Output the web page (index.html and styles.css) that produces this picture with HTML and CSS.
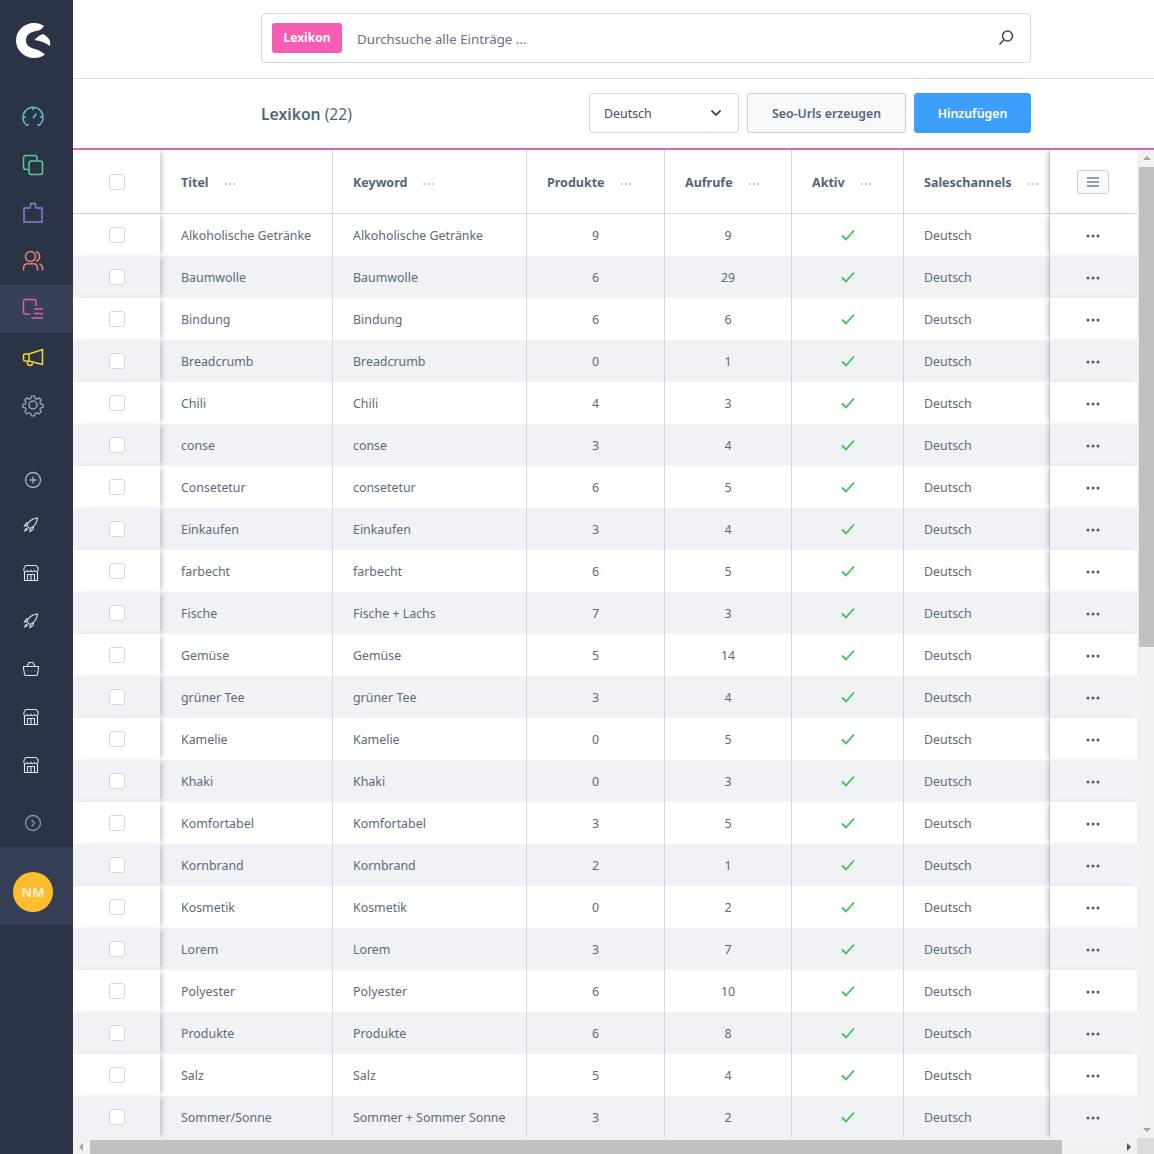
FILE: index.html
```html
<!DOCTYPE html>
<html lang="de">
<head>
    <meta charset="UTF-8">
    <title>Lexikon</title>
    <link rel="stylesheet" href="styles.css">
</head>
<body>
<svg class="defs" width="0" height="0">
    <symbol id="i-rocket" viewBox="0 0 18 18">
        <path d="M6.500 11.500 5 9.500c1.500-4 5-7 10.500-7.500C15.200 7 12 10.500 8.500 12.500z M5.500 9.500 2.500 10l2-3 2.500-.5 M8.500 12.500 8 15.500l3-2 .5-3 M5 12c-1.200.5-2 1.500-2.300 3 1.500-.3 2.500-1 3.200-2.200"/>
    </symbol>
    <symbol id="i-store" viewBox="0 0 18 18">
        <path d="M2.500 8v8.500h13V8 M1.800 6.500C1.800 3 3 1.500 5 1.500h8c2 0 3.200 1.500 3.200 5-1 1.500-2.700 1.500-3.600 0-.9 1.500-2.800 1.500-3.600 0-.8 1.500-2.700 1.500-3.600 0-.9 1.500-2.600 1.500-3.600 0z M5.500 16.500v-6h7v6 M9 10.500v6"/>
    </symbol>
    <symbol id="i-dots" viewBox="0 0 14 4">
        <circle cx="2" cy="2" r="1.500"/><circle cx="7" cy="2" r="1.500"/><circle cx="12" cy="2" r="1.500"/>
    </symbol>
    <symbol id="i-check" viewBox="0 0 14 12">
        <path d="M1 6.500 5 10.500 13 1.500"/>
    </symbol>
</svg>

<div class="app">
    <nav class="sidebar">
        <div class="logo">
            <svg width="36" height="36" viewBox="0 0 36 36"><path class="logo-mark" d="M29 4C26 2 23 1 19 1 9 1 1 9 1 18.500S9 36 19 36c4 0 8-1 11-3.500C26 29 22 27.500 18 26.500 13 25 11 22 11 18.500 11 13 15 10 21 9 25 8.500 27 7 29 4z M19.500 18c2.500-3 5.500-5 8.500-6 3 1.500 5.500 4 7 7 .2 2 .2 3 0 5-4.500-3.500-10-5-15.500-6z"/></svg>
        </div>
        <ul class="nav-main">
            <li class="nav-item nav-cyan">
                <svg width="24" height="24" viewBox="0 0 24 24"><path d="M6.200 20.500A10 10 0 1 1 17.800 20.500 M6.200 20.500l1.300-1.500 M17.800 20.500l-1.300-1.500 M12 13l3.500-4.500 M5 12H3 M21 12h-2 M12 5V3"/></svg>
            </li>
            <li class="nav-item nav-green">
                <svg width="24" height="24" viewBox="0 0 24 24"><path d="M7.500 16.500H5a2.500 2.500 0 0 1-2.500-2.500V5A2.500 2.500 0 0 1 5 2.500h8.500A2.500 2.500 0 0 1 16 5v2.500"/><rect x="8" y="8" width="13.500" height="13.500" rx="2.500"/></svg>
            </li>
            <li class="nav-item nav-purple">
                <svg width="24" height="24" viewBox="0 0 24 24"><path d="M3 7h6l1-4.500h4l1 4.500h6v14H3z"/></svg>
            </li>
            <li class="nav-item nav-orange">
                <svg width="24" height="24" viewBox="0 0 24 24"><circle cx="9.500" cy="7.500" r="5"/><path d="M2.500 21.500v-2c0-3 2-4.700 4.500-4.700h5c2.500 0 4.500 1.700 4.500 4.700v2 M15 2.700a5 5 0 0 1 0 9.600 M18.500 15c1.800.6 3 2.200 3 4.500v2"/></svg>
            </li>
            <li class="nav-item nav-pink nav-active">
                <svg width="24" height="24" viewBox="0 0 24 24"><path d="M9 17H4.500A2 2 0 0 1 2.500 15V4.500A2 2 0 0 1 4.500 2.500h8.500a2 2 0 0 1 2 2V9 M13 12h9 M13 16.500h9 M10.500 21h11.500"/></svg>
            </li>
            <li class="nav-item nav-yellow">
                <svg width="24" height="24" viewBox="0 0 24 24"><path d="M21.500 4.500v15L8 16H4a1.500 1.500 0 0 1-1.500-1.500v-4A1.500 1.500 0 0 1 4 9h4z M8 9v7 M6.500 16v1.500a2.500 2.500 0 0 0 5 .8v-1.300"/></svg>
            </li>
            <li class="nav-item nav-grey">
                <svg width="24" height="24" viewBox="0 0 24 24"><circle cx="12" cy="12" r="4"/><path d="M10.200 2.500h3.600l.6 2.700 1.800.8 2.400-1.400 2.500 2.500-1.400 2.400.8 1.800 2.700.6v3.200l-2.700.6-.8 1.800 1.400 2.400-2.500 2.500-2.400-1.400-1.800.8-.6 2.700h-3.600l-.6-2.700-1.800-.8-2.400 1.400-2.500-2.500 1.400-2.400-.8-1.800-2.700-.6v-3.200l2.700-.6.8-1.800-1.400-2.400 2.500-2.500 2.400 1.400 1.800-.8z" transform="translate(1.200 .8) scale(.9)"/></svg>
            </li>
        </ul>
        <ul class="nav-plugins">
            <li class="plugin-item plugin-add">
                <svg width="18" height="18" viewBox="0 0 18 18"><circle cx="9" cy="9" r="7.500"/><path d="M9 5.500v7 M5.500 9h7"/></svg>
            </li>
            <li class="plugin-item"><svg width="18" height="18"><use href="#i-rocket"/></svg></li>
            <li class="plugin-item"><svg width="18" height="18"><use href="#i-store"/></svg></li>
            <li class="plugin-item"><svg width="18" height="18"><use href="#i-rocket"/></svg></li>
            <li class="plugin-item">
                <svg width="18" height="18" viewBox="0 0 18 18"><path d="M1.500 6.500h15v1.500l-1 6a1.500 1.500 0 0 1-1.500 1.500H4A1.500 1.500 0 0 1 2.500 14l-1-6z M5 6.500 7 2.500h4l2 4 M5.500 11h.5 M8.700 11h.5 M12 11h.5"/></svg>
            </li>
            <li class="plugin-item"><svg width="18" height="18"><use href="#i-store"/></svg></li>
            <li class="plugin-item"><svg width="18" height="18"><use href="#i-store"/></svg></li>
        </ul>
        <div class="nav-toggle">
            <svg width="18" height="18" viewBox="0 0 18 18"><circle cx="9" cy="9" r="7.500"/><path d="M7.700 5.800 10.500 9l-2.800 3.200"/></svg>
        </div>
        <div class="user">
            <span class="avatar">NM</span>
        </div>
    </nav>

    <main class="content">
        <header class="search-bar">
            <div class="search-box">
                <span class="search-tag">Lexikon</span>
                <span class="search-placeholder">Durchsuche alle Einträge ...</span>
                <svg class="search-icon" width="18" height="18" viewBox="0 0 18 18"><circle cx="10.500" cy="7" r="5"/><path d="M7 10.800 2.500 15.500"/></svg>
            </div>
        </header>

        <div class="smart-bar">
            <h1 class="page-title">Lexikon <span class="page-count">(22)</span></h1>
            <div class="smart-actions">
                <div class="lang-select">
                    <span>Deutsch</span>
                    <svg width="12" height="8" viewBox="0 0 12 8"><path d="M1.500 1.500 6 6l4.500-4.500"/></svg>
                </div>
                <button class="btn btn-default">Seo-Urls erzeugen</button>
                <button class="btn btn-primary">Hinzufügen</button>
            </div>
        </div>

        <div class="grid-area">
            <div class="grid-wrap">
                <table class="grid">
                    <colgroup>
                        <col class="col-sel"><col class="col-title"><col class="col-key"><col class="col-prod"><col class="col-views"><col class="col-active"><col class="col-channel"><col class="col-act">
                    </colgroup>
                    <thead>
                        <tr>
                            <th class="sel"><span class="checkbox"></span></th>
                            <th>Titel <svg class="dots-h"><use href="#i-dots"/></svg></th>
                            <th>Keyword <svg class="dots-h"><use href="#i-dots"/></svg></th>
                            <th>Produkte <svg class="dots-h"><use href="#i-dots"/></svg></th>
                            <th>Aufrufe <svg class="dots-h"><use href="#i-dots"/></svg></th>
                            <th>Aktiv <svg class="dots-h"><use href="#i-dots"/></svg></th>
                            <th>Saleschannels <svg class="dots-h"><use href="#i-dots"/></svg></th>
                            <th class="act">
                                <span class="col-settings"><svg width="14" height="10" viewBox="0 0 14 10"><path d="M1 1h12 M1 5h12 M1 9h12"/></svg></span>
                            </th>
                        </tr>
                    </thead>
                    <tbody id="rows"></tbody>
                </table>
            </div>
            <div class="scroll-y">
                <span class="arrow arrow-up"></span>
                <span class="thumb-y"></span>
                <span class="arrow arrow-down"></span>
            </div>
            <div class="scroll-x">
                <span class="arrow arrow-left"></span>
                <span class="thumb-x"></span>
                <span class="arrow arrow-right"></span>
            </div>
            <div class="scroll-corner"></div>
        </div>
    </main>
</div>

<script src="rows.js"></script>
</body>
</html>
```

FILE: rows.js
```js
const entries = [
    ["Alkoholische Getränke", "Alkoholische Getränke", 9, 9],
    ["Baumwolle", "Baumwolle", 6, 29],
    ["Bindung", "Bindung", 6, 6],
    ["Breadcrumb", "Breadcrumb", 0, 1],
    ["Chili", "Chili", 4, 3],
    ["conse", "conse", 3, 4],
    ["Consetetur", "consetetur", 6, 5],
    ["Einkaufen", "Einkaufen", 3, 4],
    ["farbecht", "farbecht", 6, 5],
    ["Fische", "Fische + Lachs", 7, 3],
    ["Gemüse", "Gemüse", 5, 14],
    ["grüner Tee", "grüner Tee", 3, 4],
    ["Kamelie", "Kamelie", 0, 5],
    ["Khaki", "Khaki", 0, 3],
    ["Komfortabel", "Komfortabel", 3, 5],
    ["Kornbrand", "Kornbrand", 2, 1],
    ["Kosmetik", "Kosmetik", 0, 2],
    ["Lorem", "Lorem", 3, 7],
    ["Polyester", "Polyester", 6, 10],
    ["Produkte", "Produkte", 6, 8],
    ["Salz", "Salz", 5, 4],
    ["Sommer/Sonne", "Sommer + Sommer Sonne", 3, 2]
];

document.getElementById("rows").innerHTML = entries.map(e => `
    <tr>
        <td class="sel"><span class="checkbox"></span></td>
        <td>${e[0]}</td>
        <td>${e[1]}</td>
        <td class="num">${e[2]}</td>
        <td class="num">${e[3]}</td>
        <td class="num"><svg class="check"><use href="#i-check"/></svg></td>
        <td>Deutsch</td>
        <td class="act"><svg class="dots"><use href="#i-dots"/></svg></td>
    </tr>`).join("");
```

FILE: styles.css
```css
* {
    box-sizing: border-box;
}

html, body {
    margin: 0;
    height: 100%;
    overflow: hidden;
}

body {
    font-family: "Noto Sans", Arial, sans-serif;
    font-size: 12.4px;
    color: #52667a;
    background-color: white;
}

ul {
    list-style: none;
    margin: 0;
    padding: 0;
}

svg {
    display: block;
    fill: none;
    stroke: currentColor;
}

.defs {
    position: absolute;
}

.app {
    display: flex;
    height: 1154px;
}

/* sidebar */
.sidebar {
    width: 73px;
    flex-shrink: 0;
    background-color: #2b3446;
    display: flex;
    flex-direction: column;
}

.logo {
    height: 79px;
    padding-right: 7px;
    display: flex;
    align-items: center;
    justify-content: center;
}

.logo svg {
    stroke: none;
}

.logo-mark {
    fill: white;
    fill-rule: evenodd;
}

.nav-main {
    margin-top: 14px;
}

.nav-item {
    height: 48px;
    padding-right: 7px;
    display: flex;
    align-items: center;
    justify-content: center;
}

.nav-item svg {
    stroke-width: 1.5;
}

.nav-active {
    background-color: #364158;
}

.nav-cyan { color: #5bc3d6; }
.nav-green { color: #57c99b; }
.nav-purple { color: #8c7fd6; }
.nav-orange { color: #e5866b; }
.nav-pink { color: #e15fb0; }
.nav-yellow { color: #fbd133; }
.nav-grey { color: #94a3b2; }

.nav-plugins {
    margin-top: 30px;
}

.plugin-item {
    height: 48px;
    display: flex;
    align-items: center;
    justify-content: center;
    color: #dfe5ea;
    padding-right: 11px;
}

.plugin-item svg {
    stroke-width: 1.1;
}

.plugin-add {
    height: 42px;
    padding-right: 7px;
    color: #a5b2bf;
}

.plugin-add svg,
.nav-toggle svg {
    stroke-width: 1.3;
}

.nav-toggle {
    height: 48px;
    margin-top: 10px;
    padding-right: 7px;
    display: flex;
    align-items: center;
    justify-content: center;
    color: #8695a5;
}

.user {
    height: 78px;
    padding: 12px 7px 0 0;
    background-color: #343e54;
    display: flex;
    align-items: center;
    justify-content: center;
}

.avatar {
    width: 40px;
    height: 40px;
    border-radius: 50%;
    background-color: #ffbd2e;
    color: #fbeccb;
    font-weight: 700;
    font-size: 13px;
    display: flex;
    align-items: center;
    justify-content: center;
}

/* search */
.content {
    flex: 1;
    min-width: 0;
    display: flex;
    flex-direction: column;
}

.search-bar {
    height: 79px;
    flex-shrink: 0;
    padding: 13px 123px 0 188px;
    border-bottom: 1px solid #d8dfe5;
}

.search-box {
    height: 50px;
    border: 1px solid #d1d9e0;
    border-radius: 4px;
    display: flex;
    align-items: center;
    padding: 0 15px 0 10px;
}

.search-tag {
    width: 70px;
    height: 30px;
    padding-bottom: 2px;
    border-radius: 3px;
    background-color: #f65db3;
    color: white;
    font-weight: 700;
    font-size: 12px;
    display: flex;
    align-items: center;
    justify-content: center;
}

.search-placeholder {
    margin-left: 15px;
    padding-top: 2px;
    font-size: 13.3px;
    color: #66727f;
    flex: 1;
}

.search-icon {
    stroke-width: 1.6;
    color: #3f4d5c;
}

/* title row */
.smart-bar {
    height: 69px;
    flex-shrink: 0;
    padding: 14px 123px 0 188px;
    display: flex;
    justify-content: space-between;
}

.page-title {
    margin: 0;
    height: 43px;
    line-height: 43px;
    font-size: 15.7px;
    font-weight: 600;
    color: #52667a;
}

.page-count {
    font-weight: 400;
}

.smart-actions {
    display: flex;
    gap: 8px;
}

.lang-select {
    width: 150px;
    height: 40px;
    border: 1px solid #d1d9e0;
    border-radius: 3px;
    padding: 0 16px 0 14px;
    display: flex;
    align-items: center;
    justify-content: space-between;
    color: #3f4d5c;
}

.lang-select svg {
    stroke-width: 1.8;
}

.btn {
    height: 40px;
    border-radius: 3px;
    font-family: inherit;
    font-size: 12.3px;
    font-weight: 600;
    padding: 0;
}

.btn-default {
    width: 159px;
    background-color: #f8f9fb;
    border: 1px solid #c8d0d9;
    color: #52667a;
}

.btn-primary {
    width: 117px;
    background-color: #3d9ffa;
    border: 1px solid #3d9ffa;
    color: white;
}

/* table */
.grid-area {
    flex: 1;
    min-height: 0;
    border-top: 2px solid #e85fae;
    display: grid;
    grid-template-columns: 1fr 17px;
    grid-template-rows: 1fr 16px;
}

.grid-wrap {
    overflow: hidden;
}

.grid {
    width: 1064px;
    table-layout: fixed;
    border-collapse: separate;
    border-spacing: 0;
}

.col-sel { width: 87px; }
.col-title { width: 173px; }
.col-key { width: 194px; }
.col-prod { width: 138px; }
.col-views { width: 127px; }
.col-active { width: 112px; }
.col-channel { width: 146px; }
.col-act { width: 87px; }

.grid th,
.grid td {
    padding: 0 0 0 20px;
    border-right: 1px solid #d1d9e0;
    background-color: white;
    text-align: left;
    white-space: nowrap;
}

.grid th {
    height: 64px;
    padding-top: 2px;
    border-bottom: 1px solid #d1d9e0;
    font-size: 12.5px;
    font-weight: 700;
    color: #52667a;
}

.grid tr > :nth-child(2) {
    padding-left: 21px;
}

.grid td {
    height: 42px;
    color: #5c6b7a;
}

.grid tbody tr:nth-child(even) td {
    background-color: #f0f2f5;
}

.grid .num {
    padding-left: 0;
    text-align: center;
}

.grid .sel,
.grid .act {
    padding: 0;
    border-right: 0;
    position: relative;
    z-index: 1;
}

.grid .act {
    padding-right: 2px;
    box-shadow: -4px 0 5px -2px rgba(120, 135, 150, 0.45);
}

.grid .sel {
    box-shadow: 4px 0 5px -2px rgba(120, 135, 150, 0.45);
}

.checkbox {
    display: block;
    width: 16px;
    height: 16px;
    margin: 0 auto;
    position: relative;
    left: 0.5px;
    background-color: white;
    border: 1px solid #d1d9e0;
    border-radius: 3px;
}

.dots-h {
    display: inline-block;
    width: 12px;
    height: 4px;
    margin-left: 12px;
    fill: #c9d2da;
    stroke: none;
    vertical-align: middle;
}

.dots {
    width: 14px;
    height: 4px;
    margin: 2px auto 0;
    fill: #4a5a6a;
    stroke: none;
}

.check {
    width: 14px;
    height: 12px;
    margin: 0 auto;
    color: #37c45a;
    stroke-width: 1.8;
}

.col-settings {
    width: 32px;
    height: 24px;
    margin: 0 auto;
    border: 1px solid #c8d0d9;
    border-radius: 3px;
    background-color: #f8f9fb;
    color: #6b7d8e;
    display: flex;
    align-items: center;
    justify-content: center;
}

.col-settings svg {
    stroke-width: 1.5;
}

/* scrollbars */
.scroll-y,
.scroll-x {
    background-color: #f1f1f1;
    display: flex;
    align-items: center;
}

.scroll-y {
    flex-direction: column;
    padding-left: 2px;
}

.scroll-x {
    padding-top: 1px;
}

.thumb-y {
    width: 15px;
    height: 480px;
    background-color: #c1c1c1;
}

.thumb-x {
    width: 972px;
    height: 14px;
    background-color: #c1c1c1;
}

.arrow {
    width: 0;
    height: 0;
    border: 4px solid transparent;
    flex-shrink: 0;
}

.arrow-up {
    border-top: 0;
    border-bottom-color: #a3a3a3;
    margin: 6px 0 7px;
}

.arrow-down {
    border-bottom: 0;
    border-top-color: #a3a3a3;
    margin: auto 0 6px;
}

.arrow-left {
    border-left: 0;
    border-right-color: #a3a3a3;
    margin: 0 7px 0 6px;
}

.arrow-right {
    border-right: 0;
    border-left-color: #505050;
    margin: 0 6px 0 auto;
}

.scroll-corner {
    background-color: #dcdcdc;
}
```
